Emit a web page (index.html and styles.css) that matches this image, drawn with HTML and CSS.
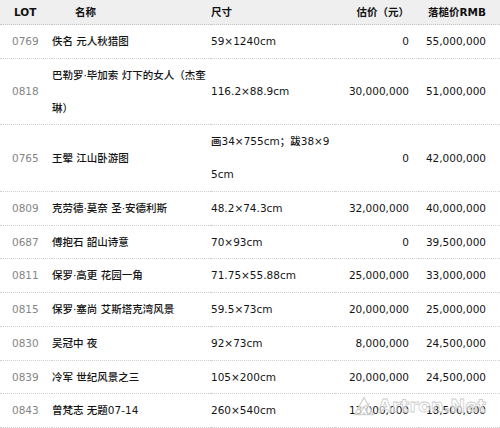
FILE: index.html
```html
<!DOCTYPE html>
<html lang="zh">
<head>
<meta charset="utf-8">
<title>拍卖成交</title>
<link rel="stylesheet" href="styles.css">
</head>
<body>
<div class="wrap">
<table class="lots">
  <colgroup>
    <col class="c-lot"><col class="c-name"><col class="c-size"><col class="c-est"><col class="c-price">
  </colgroup>
  <thead>
    <tr>
      <th class="h-lot">LOT</th>
      <th class="h-name">名称</th>
      <th class="h-size">尺寸</th>
      <th class="h-est">估价（元）</th>
      <th class="h-price">落槌价RMB</th>
    </tr>
  </thead>
  <tbody>
    <tr><td class="lot">0769</td><td class="name">佚名 元人秋猎图</td><td class="size">59×1240cm</td><td class="est">0</td><td class="price">55,000,000</td></tr>
    <tr><td class="lot">0818</td><td class="name">巴勒罗·毕加索 灯下的女人（杰奎琳）</td><td class="size">116.2×88.9cm</td><td class="est">30,000,000</td><td class="price">51,000,000</td></tr>
    <tr><td class="lot">0765</td><td class="name">王翚 江山卧游图</td><td class="size">画34×755cm；跋38×95cm</td><td class="est">0</td><td class="price">42,000,000</td></tr>
    <tr><td class="lot">0809</td><td class="name">克劳德·莫奈 圣·安德利斯</td><td class="size">48.2×74.3cm</td><td class="est">32,000,000</td><td class="price">40,000,000</td></tr>
    <tr><td class="lot">0687</td><td class="name">傅抱石 韶山诗意</td><td class="size">70×93cm</td><td class="est">0</td><td class="price">39,500,000</td></tr>
    <tr><td class="lot">0811</td><td class="name">保罗·高更 花园一角</td><td class="size">71.75×55.88cm</td><td class="est">25,000,000</td><td class="price">33,000,000</td></tr>
    <tr><td class="lot">0815</td><td class="name">保罗·塞尚 艾斯塔克湾风景</td><td class="size">59.5×73cm</td><td class="est">20,000,000</td><td class="price">25,000,000</td></tr>
    <tr><td class="lot">0830</td><td class="name">吴冠中 夜</td><td class="size">92×73cm</td><td class="est">8,000,000</td><td class="price">24,500,000</td></tr>
    <tr><td class="lot">0839</td><td class="name">冷军 世纪风景之三</td><td class="size">105×200cm</td><td class="est">20,000,000</td><td class="price">24,500,000</td></tr>
    <tr><td class="lot">0843</td><td class="name">曾梵志 无题07-14</td><td class="size">260×540cm</td><td class="est">13,000,000</td><td class="price">18,500,000</td></tr>
  </tbody>
</table>
<div class="watermark" aria-hidden="true">
  <svg class="wm-logo" width="22" height="20" viewBox="0 0 22 20">
    <path d="M1.5 18.5 L11 1.5 L20.5 18.5 Z" fill="rgba(255,255,255,0.6)" stroke="#d2d2d2" stroke-width="1.3"/>
    <path d="M5 14 L17 7.5 M7 18.5 L11 10.5 L15 18.5" fill="none" stroke="#d2d2d2" stroke-width="1.1"/>
  </svg>
  <span class="wm-text">Artron.Net</span>
</div>
</div>
</body>
</html>
```
FILE: styles.css
```css
html, body {
  margin: 0;
  padding: 0;
  background: #ffffff;
}
.wrap {
  position: relative;
  width: 500px;
  height: 428px;
  overflow: hidden;
}
.lots {
  width: 500px;
  table-layout: fixed;
  border-collapse: collapse;
  font-family: "DejaVu Sans", "Noto Sans CJK SC", sans-serif;
  font-size: 10.5px;
  font-weight: 500;
  color: #141414;
}
.c-lot { width: 52px; }
.c-name { width: 159px; }
.c-size { width: 124px; }
.c-est { width: 84px; }
.c-price { width: 81px; }

.lots th {
  background: #efefef;
  font-weight: bold;
  color: #111111;
  height: 24px;
  line-height: 24px;
  padding: 0;
  border-bottom: 1px dotted #c4c4c4;
  text-align: left;
  white-space: nowrap;
}
.lots th.h-lot { padding-left: 14px; }
.lots th.h-name { padding-left: 23px; }
.lots th.h-est { text-align: right; padding-right: 10px; }
.lots th.h-price { text-align: right; padding-right: 14px; }

.lots td {
  padding: 0;
  line-height: 32.75px;
  border-bottom: 1px dotted #cfcfcf;
  vertical-align: middle;
  word-break: break-all;
}
.lots td.lot {
  padding-left: 12px;
  color: #858585;
  font-weight: normal;
}
.lots td.name { padding-right: 3px; }
.lots td.size { padding-right: 3px; }
.lots td.est {
  text-align: right;
  padding-right: 10px;
}
.lots td.price {
  text-align: right;
  padding-right: 14px;
}

.watermark {
  position: absolute;
  left: 353px;
  top: 395px;
  display: flex;
  align-items: center;
  gap: 3px;
  pointer-events: none;
}
.wm-text {
  font-family: "DejaVu Sans", sans-serif;
  font-weight: bold;
  font-size: 18px;
  line-height: 22px;
  color: rgba(255, 255, 255, 0.6);
  -webkit-text-stroke: 0.8px #cdcdcd;
}
```
